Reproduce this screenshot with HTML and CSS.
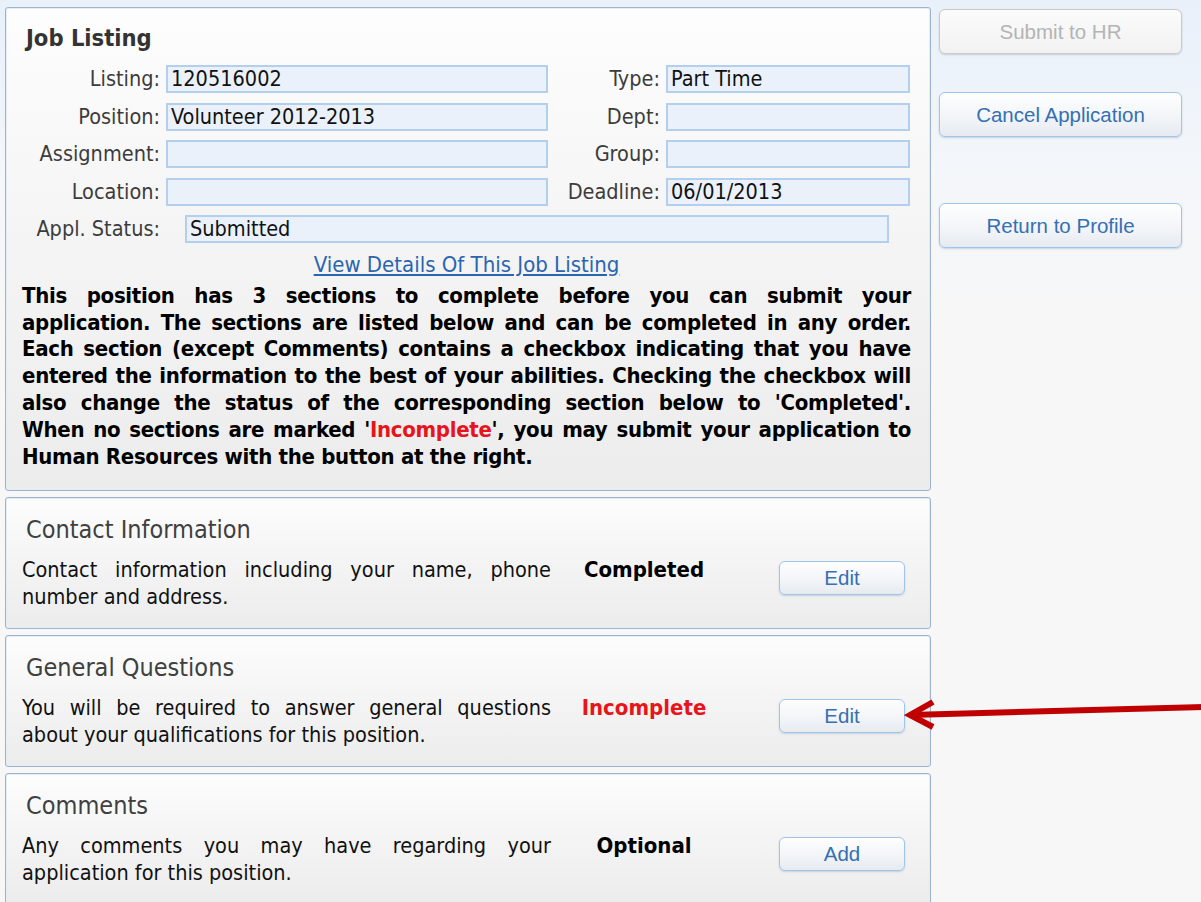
FILE: index.html
```html
<!DOCTYPE html>
<html lang="en">
<head>
<meta charset="utf-8">
<title>Job Application</title>
<link rel="stylesheet" href="styles.css">
</head>
<body>
<div class="page">
  <main class="sections">
    <section class="panel listing">
      <h2 class="panel-title strong">Job Listing</h2>
      <div class="fields">
        <label>Listing:</label><div class="field">120516002</div>
        <label>Type:</label><div class="field">Part Time</div>
        <label>Position:</label><div class="field">Volunteer 2012-2013</div>
        <label>Dept:</label><div class="field"></div>
        <label>Assignment:</label><div class="field"></div>
        <label>Group:</label><div class="field"></div>
        <label>Location:</label><div class="field"></div>
        <label>Deadline:</label><div class="field">06/01/2013</div>
      </div>
      <div class="status-row">
        <label>Appl. Status:</label><div class="field wide">Submitted</div>
      </div>
      <div class="link-row"><a href="#">View Details Of This Job Listing</a></div>
      <p class="intro">
        <span class="ln">This position has 3 sections to complete before you can submit your</span>
        <span class="ln">application. The sections are listed below and can be completed in any order.</span>
        <span class="ln">Each section (except Comments) contains a checkbox indicating that you have</span>
        <span class="ln">entered the information to the best of your abilities. Checking the checkbox will</span>
        <span class="ln">also change the status of the corresponding section below to 'Completed'.</span>
        <span class="ln">When no sections are marked '<span class="red">Incomplete</span>', you may submit your application to</span>
        <span class="ln last">Human Resources with the button at the right.</span>
      </p>
    </section>

    <section class="panel step">
      <h2 class="panel-title">Contact Information</h2>
      <div class="step-row">
        <p class="step-desc">Contact information including your name, phone number and address.</p>
        <div class="step-status">Completed</div>
        <div class="step-action"><button class="btn small">Edit</button></div>
      </div>
    </section>

    <section class="panel step">
      <h2 class="panel-title">General Questions</h2>
      <div class="step-row">
        <p class="step-desc">You will be required to answer general questions about your qualifications for this position.</p>
        <div class="step-status red">Incomplete</div>
        <div class="step-action"><button class="btn small">Edit</button></div>
      </div>
    </section>

    <section class="panel step">
      <h2 class="panel-title">Comments</h2>
      <div class="step-row">
        <p class="step-desc">Any comments you may have regarding your application for this position.</p>
        <div class="step-status">Optional</div>
        <div class="step-action"><button class="btn small">Add</button></div>
      </div>
    </section>
  </main>

  <aside class="actions">
    <button class="btn big disabled">Submit to HR</button>
    <button class="btn big cancel">Cancel Application</button>
    <button class="btn big">Return to Profile</button>
  </aside>
</div>

<svg class="pointer" width="300" height="40" viewBox="0 0 300 40" aria-hidden="true">
  <path d="M6 25 L300 17" stroke="#c00000" stroke-width="6" fill="none"/>
  <path d="M29 12 L6 25 L29 37" stroke="#c00000" stroke-width="6" fill="none" stroke-linejoin="miter"/>
</svg>
</body>
</html>
```

FILE: styles.css
```css
html, body {
  margin: 0;
  padding: 0;
}

body {
  background: linear-gradient(180deg, #e8f0fa 0px, #f3f6fa 160px, #f7f7f7 320px, #f7f7f7 100%);
  font-family: "DejaVu Sans Condensed", "DejaVu Sans", sans-serif;
  font-size: 21.5px;
  color: #111;
  min-height: 902px;
  overflow: hidden;
}

.page {
  display: flex;
  align-items: flex-start;
  gap: 8px;
  padding: 7px 0 0 5px;
}

.sections {
  width: 926px;
  display: flex;
  flex-direction: column;
  gap: 6px;
}

.panel {
  border: 1px solid #9db4d0;
  border-radius: 3px;
  background: linear-gradient(180deg, #fdfdfd 0%, #f4f4f4 50%, #ececec 100%);
  box-shadow: inset 0 0 0 1px #e4ecf6;
  padding: 0 19px 0 16px;
}

.panel-title {
  margin: 0;
  font-size: 25px;
  font-weight: normal;
  color: #404040;
  padding-left: 4px;
  box-sizing: border-box;
}

.panel-title.strong {
  font-size: 23.5px;
  font-weight: bold;
  color: #333;
}

/* Job listing block */
.listing .panel-title {
  padding-top: 15px;
  line-height: 30px;
  height: 57px;
}

.fields {
  display: grid;
  grid-template-columns: 138px 382px 106px 244px;
  column-gap: 6px;
  row-gap: 9.6px;
}

label {
  color: #3c3c3c;
  text-align: right;
  line-height: 28px;
  white-space: nowrap;
}

.field {
  height: 28px;
  box-sizing: border-box;
  background: #eaf1fb;
  border: 2px solid #b3cfee;
  padding: 0 3px;
  line-height: 24px;
  color: #111;
  white-space: nowrap;
}

.status-row {
  display: flex;
  gap: 25px;
  margin-top: 9px;
}

.status-row label {
  width: 138px;
}

.field.wide {
  width: 704px;
}

.link-row {
  text-align: center;
  line-height: 26px;
  margin-top: 9px;
  font-size: 22px;
}

.link-row a {
  color: #2a65b0;
  text-decoration: underline;
}

/* Instructions: each line is set flush on both sides */
.intro {
  margin: 5px 0 0;
  padding-bottom: 20px;
  font-size: 22px;
  font-weight: bold;
  letter-spacing: -0.3px;
  line-height: 26.8px;
  color: #000;
}

.intro .ln {
  display: block;
  white-space: nowrap;
  text-align: justify;
  text-align-last: justify;
}

.intro .ln.last {
  text-align-last: left;
}

.red {
  color: #e8141b;
}

.intro .red {
  display: inline;
}

/* Section steps */
.step {
  height: 132px;
  box-sizing: border-box;
}

.step .panel-title {
  padding-top: 18px;
  line-height: 28px;
  height: 58px;
}

.step-row {
  display: flex;
  align-items: flex-start;
}

.step-desc {
  margin: 0;
  width: 529px;
  text-align: justify;
  line-height: 27px;
  color: #111;
}

.step-status {
  width: 186px;
  text-align: center;
  font-size: 22px;
  font-weight: bold;
  line-height: 27px;
  color: #000;
}

.step-status.red {
  color: #e8141b;
}

.step-action {
  padding-left: 42px;
  padding-top: 5px;
}

/* Buttons */
.btn {
  font-family: "Liberation Sans", Arial, sans-serif;
  color: #3570b3;
  background: linear-gradient(180deg, #fefefe 0%, #f4f6f9 50%, #e6ebf1 100%);
  border: 1px solid #9ec5ec;
  border-radius: 6px;
  box-shadow: 0 1px 2px rgba(120, 140, 170, 0.35);
  cursor: pointer;
  padding: 0;
}

.btn.small {
  width: 126px;
  height: 34px;
  font-size: 20.5px;
}

.actions {
  display: flex;
  flex-direction: column;
  width: 243px;
  padding-top: 2px;
}

.btn.big {
  width: 243px;
  height: 45px;
  font-size: 20.5px;
}

.btn.cancel {
  margin-top: 38px;
  margin-bottom: 66px;
}

.btn.disabled {
  color: #b4b4b4;
  border-color: #c9c9c9;
  background: linear-gradient(180deg, #fbfbfb 0%, #f2f2f2 100%);
  box-shadow: 0 1px 2px rgba(0, 0, 0, 0.15);
  cursor: default;
}

/* Red callout arrow pointing at the questions button */
.pointer {
  position: absolute;
  left: 904px;
  top: 690px;
}
```
